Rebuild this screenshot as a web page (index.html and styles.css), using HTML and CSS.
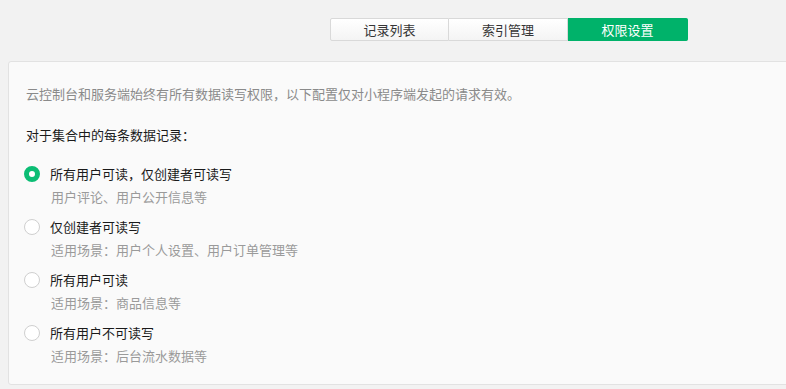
FILE: index.html
```html
<!DOCTYPE html>
<html lang="zh-CN">
<head>
  <meta charset="UTF-8" />
  <meta name="viewport" content="width=device-width, initial-scale=1.0"/>
  <title>权限设置</title>
  <link rel="stylesheet" href="styles.css">
</head>
<body>

  <!-- 顶部标签 -->
  <div class="tabs">
    <button class="tab-button">记录列表</button>
    <button class="tab-button">索引管理</button>
    <button class="tab-button active">权限设置</button>
  </div>

  <!-- 权限面板 -->
  <div class="panel">
    <p class="desc">云控制台和服务端始终有所有数据读写权限，以下配置仅对小程序端发起的请求有效。</p>
    <p class="heading">对于集合中的每条数据记录：</p>

    <div class="options">
      <label class="option">
        <span class="option-title"><span class="radio checked"></span>所有用户可读，仅创建者可读写</span>
        <span class="option-sub">用户评论、用户公开信息等</span>
      </label>
      <label class="option">
        <span class="option-title"><span class="radio"></span>仅创建者可读写</span>
        <span class="option-sub">适用场景：用户个人设置、用户订单管理等</span>
      </label>
      <label class="option">
        <span class="option-title"><span class="radio"></span>所有用户可读</span>
        <span class="option-sub">适用场景：商品信息等</span>
      </label>
      <label class="option">
        <span class="option-title"><span class="radio"></span>所有用户不可读写</span>
        <span class="option-sub">适用场景：后台流水数据等</span>
      </label>
    </div>
  </div>

</body>
</html>
```

FILE: styles.css
```css
body {
  margin: 0;
  background: #f2f2f2;
  font-family: "Noto Sans CJK SC", "Noto Sans", sans-serif;
  font-size: 13px;
  overflow: hidden;
}

.tabs {
  display: flex;
  justify-content: flex-end;
  padding: 18px 98px 0 0;
}

.tab-button {
  width: 119px;
  height: 23px;
  padding: 0;
  font-family: inherit;
  font-size: 13px;
  line-height: 21px;
  color: #353535;
  background: linear-gradient(#ffffff, #f4f4f4);
  border: 1px solid #d9d9d9;
  border-left: none;
  cursor: pointer;
}

.tab-button:first-child {
  border-left: 1px solid #d9d9d9;
  border-radius: 2px 0 0 2px;
}

.tab-button:last-child {
  width: 120px;
  border-radius: 0 2px 2px 0;
}

.tab-button.active {
  background: #00b26a;
  border-color: #00b26a;
  color: #fff;
}

.panel {
  margin: 20px -6px 0 8px;
  height: 300px;
  padding: 22px 17px 0;
  background: #fafafa;
  border: 1px solid #e2e2e2;
  border-radius: 3px;
}

.desc {
  margin: 0;
  line-height: 20px;
  color: #8a8a8a;
}

.heading {
  margin: 21px 0 0;
  line-height: 20px;
  color: #1a1a1a;
}

.options {
  display: flex;
  flex-direction: column;
  gap: 10px;
  margin-top: 19px;
}

.option {
  display: flex;
  flex-direction: column;
  gap: 3px;
  cursor: pointer;
}

.option-title {
  display: flex;
  align-items: center;
  line-height: 20px;
  color: #1a1a1a;
}

.option-sub {
  padding-left: 25px;
  line-height: 20px;
  color: #9a9a9a;
}

.radio {
  box-sizing: border-box;
  width: 16px;
  height: 16px;
  margin: 0 10px 0 -2px;
  border: 1px solid #cfcfcf;
  border-radius: 50%;
  background: #fff;
}

.radio.checked {
  border: 5px solid #0bbd74;
  background: #fff;
}
```
